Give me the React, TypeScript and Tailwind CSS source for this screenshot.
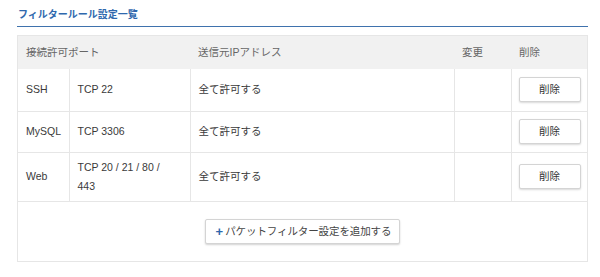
import React from "react";

const rows = [
  { name: "SSH", port: "TCP 22", src: "全て許可する", h: "h-[42px]" },
  { name: "MySQL", port: "TCP 3306", src: "全て許可する", h: "h-[41px]" },
  { name: "Web", port: "TCP 20 / 21 / 80 / 443", src: "全て許可する", h: "h-[49px]" },
];

export default function App() {
  return (
    <div
      className="w-[600px] h-[277px] bg-white text-[#3a3a3a] text-[10.5px]"
      style={{ fontFamily: '"Liberation Sans", "Noto Sans CJK JP", sans-serif' }}
    >
      <div className="pl-[17px] pt-[9px] w-[588px]">
        <div className="h-[18px] border-b border-[#3f72ad] pl-[1px] text-[10px] font-bold text-[#2f68ad] leading-[12px]">
          フィルタールール設定一覧
        </div>
        <div className="mt-[8px] border border-[#e6e6e6]">
          <table className="w-full border-collapse table-fixed">
            <colgroup>
              <col className="w-[51px]" />
              <col className="w-[121px]" />
              <col className="w-[264px]" />
              <col className="w-[57px]" />
              <col />
            </colgroup>
            <thead>
              <tr className="h-[33px] bg-[#f1f1f1] text-[#666] text-left">
                <th colSpan={2} className="font-normal pl-[8px]">接続許可ポート</th>
                <th className="font-normal pl-[8px]">送信元IPアドレス</th>
                <th className="font-normal pl-[8px]">変更</th>
                <th className="font-normal pl-[8px]">削除</th>
              </tr>
            </thead>
            <tbody>
              {rows.map((r) => (
                <tr key={r.name} className={`${r.h} border-b border-[#e6e6e6]`}>
                  <td className="pl-[8px] border-r border-[#e6e6e6]">{r.name}</td>
                  <td className="pl-[8px] pr-[14px] border-r border-[#e6e6e6] leading-[19px]">{r.port}</td>
                  <td className="pl-[8px] border-r border-[#e6e6e6]">{r.src}</td>
                  <td className="border-r border-[#e6e6e6]"></td>
                  <td className="pl-[7px]">
                    <button className="w-[62px] h-[25px] bg-white border border-[#d4d4d4] rounded-[2px] shadow-[0_1px_2px_rgba(0,0,0,0.15)] text-[#333] text-[10.5px]">
                      削除
                    </button>
                  </td>
                </tr>
              ))}
            </tbody>
          </table>
          <div className="h-[59px] flex items-center justify-center pt-[1px]">
            <button className="w-[195px] h-[25px] pl-[2px] bg-white border border-[#d4d4d4] rounded-[2px] shadow-[0_1px_2px_rgba(0,0,0,0.18)] text-[#444] text-[10.5px] flex items-center justify-center gap-[2px]">
              <span className="text-[#2f68ad] font-bold text-[13px] leading-none">+</span>
              <span className="tracking-[-0.1px]">パケットフィルター設定を追加する</span>
            </button>
          </div>
        </div>
      </div>
    </div>
  );
}
